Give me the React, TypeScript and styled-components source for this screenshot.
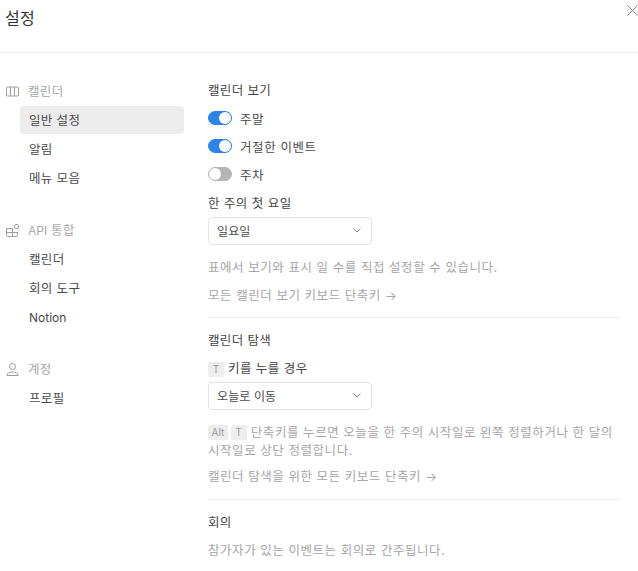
import React from "react";
import styled, { createGlobalStyle } from "styled-components";

const Global = createGlobalStyle`
  html, body { margin: 0; padding: 0; background: #fff; }
  body { font-family: Inter, "Noto Sans CJK KR", sans-serif; font-size: 12.5px; letter-spacing: 0.35px; color: #37352f; }
`;

const Page = styled.div`
  width: 638px;
  height: 571px;
  overflow: hidden;
  display: flex;
  flex-direction: column;
  position: relative;
`;
const Header = styled.header`
  height: 53px;
  flex: none;
  box-sizing: border-box;
  border-bottom: 1px solid #ededed;
  padding: 7px 0 0 5px;
`;
const Title = styled.h1`
  margin: 0;
  font-size: 16px;
  line-height: 22px;
  font-weight: 400;
  color: #333;
`;
const Close = styled.button`
  position: absolute;
  top: 5px;
  right: 0;
  width: 11px;
  height: 11px;
  padding: 0;
  border: 0;
  background: none;
  color: #8a8a8a;
  display: flex;
`;
const Body = styled.div`
  display: flex;
  flex: 1;
  min-height: 0;
`;
const Sidebar = styled.nav`
  width: 184px;
  flex: none;
  box-sizing: border-box;
  padding: 24px 0 0 5px;
  display: flex;
  flex-direction: column;
`;
const Group = styled.div`
  display: flex;
  flex-direction: column;
  margin-bottom: 23px;
`;
const GroupHead = styled.div`
  height: 29px;
  display: flex;
  align-items: center;
  gap: 8px;
  color: #a8a8a8;
  line-height: 16px;
`;
const GroupIcon = styled.svg`
  width: 15px;
  height: 15px;
  flex: none;
  color: #9c9c9c;
`;
const Item = styled.div<{ $active?: boolean; $latin?: boolean }>`
  height: 28px;
  box-sizing: border-box;
  margin: 0 0 1px 15px;
  padding: 0 0 ${(p) => (p.$latin ? "0" : "2px")} 9px;
  display: flex;
  align-items: center;
  border-radius: 4px;
  color: #4a4a4a;
  background: ${(p) => (p.$active ? "#ececec" : "transparent")};
`;
const Latin = styled.span`
  font-size: 12px;
  letter-spacing: 0;
`;
const Main = styled.main`
  width: 412px;
  margin-left: 24px;
  flex: none;
  padding-top: 29px;
  box-sizing: border-box;
`;
const Heading = styled.div<{ $mt?: number }>`
  margin-top: ${(p) => p.$mt ?? 0}px;
  line-height: 18px;
  color: #444;
`;
const ToggleRow = styled.div<{ $mt: number }>`
  height: 18px;
  margin-top: ${(p) => p.$mt}px;
  display: flex;
  align-items: center;
  gap: 8px;
  color: #4a4a4a;
  letter-spacing: 0.6px;
`;
const Track = styled.span<{ $on: boolean }>`
  width: 24px;
  height: 14px;
  border-radius: 7px;
  box-sizing: border-box;
  display: flex;
  align-items: center;
  justify-content: ${(p) => (p.$on ? "flex-end" : "flex-start")};
  background: ${(p) => (p.$on ? "#2b84e8" : "#b5b5b5")};
  border: 1px solid ${(p) => (p.$on ? "#2b84e8" : "#b5b5b5")};
`;
const Knob = styled.span`
  width: 12px;
  height: 12px;
  border-radius: 50%;
  background: #fff;
`;
const FieldLabel = styled(Heading)`
  display: flex;
  align-items: center;
  gap: 4px;
  letter-spacing: 0.45px;
`;
const Select = styled.div`
  width: 164px;
  height: 28px;
  margin-top: 4px;
  box-sizing: border-box;
  border: 1px solid #e3e3e3;
  border-radius: 4px;
  padding: 0 9px 2px 8px;
  display: flex;
  align-items: center;
  justify-content: space-between;
  color: #4a4a4a;
  font-size: 12px;
  letter-spacing: 0.1px;
`;
const Hint = styled.p<{ $mt: number }>`
  margin: ${(p) => p.$mt}px 0 0;
  line-height: 18px;
  color: #a6a6a6;
  letter-spacing: 0.55px;
`;
const Divider = styled.hr<{ $mt: number }>`
  border: 0;
  border-top: 1px solid #ededed;
  margin: ${(p) => p.$mt}px 0 0;
`;
const Key = styled.kbd`
  display: inline-flex;
  align-items: center;
  justify-content: center;
  min-width: 16px;
  height: 15px;
  padding: 0 3.500px;
  box-sizing: border-box;
  border-radius: 2px;
  background: #ededed;
  color: #9a9a9a;
  font: inherit;
  font-size: 10px;
  letter-spacing: 0;
  vertical-align: 1px;
`;
const KeyGap = styled.span`
  display: inline-block;
  width: 3px;
`;

const Chevron = () => (
  <svg width="10" height="10" viewBox="0 0 10 10" fill="none" stroke="#8c8c8c" strokeWidth="1">
    <path d="M1.500 3.500 5 7l3.500-3.500" />
  </svg>
);

const Toggle = ({ on, label, mt }: { on: boolean; label: string; mt: number }) => (
  <ToggleRow $mt={mt}>
    <Track $on={on}>
      <Knob />
    </Track>
    {label}
  </ToggleRow>
);

export default function App() {
  return (
    <Page>
      <Global />
      <Header>
        <Title>설정</Title>
      </Header>
      <Close aria-label="닫기">
        <svg width="11" height="11" viewBox="0 0 11 11" fill="none" stroke="currentColor" strokeWidth="1">
          <path d="M.5.5l10 10M10.500.5l-10 10" />
        </svg>
      </Close>
      <Body>
        <Sidebar>
          <Group>
            <GroupHead>
              <GroupIcon viewBox="0 0 15 15" fill="none" stroke="currentColor" strokeWidth="1">
                <rect x="1.500" y="3" width="12" height="9" rx="1" />
                <path d="M5.500 3v9M9.500 3v9" />
              </GroupIcon>
              캘린더
            </GroupHead>
            <Item $active>일반 설정</Item>
            <Item>알림</Item>
            <Item>메뉴 모음</Item>
          </Group>
          <Group>
            <GroupHead>
              <GroupIcon viewBox="0 0 15 15" fill="none" stroke="currentColor" strokeWidth="1">
                <path d="M1.500 5.500h6v8h-5a1 1 0 0 1-1-1zM7.500 9.500h5v3a1 1 0 0 1-1 1h-4zM1.500 9.500h6" />
                <rect x="9.500" y="1.500" width="4" height="4" rx="1.500" />
              </GroupIcon>
              <span><Latin>API</Latin> 통합</span>
            </GroupHead>
            <Item>캘린더</Item>
            <Item>회의 도구</Item>
            <Item $latin><Latin>Notion</Latin></Item>
          </Group>
          <Group>
            <GroupHead>
              <GroupIcon viewBox="0 0 15 15" fill="none" stroke="currentColor" strokeWidth="1">
                <circle cx="7.500" cy="4.500" r="3" />
                <path d="M2 13.500c0-2.200 1.800-3.500 5.500-3.500s5.500 1.300 5.500 3.500z" />
              </GroupIcon>
              계정
            </GroupHead>
            <Item>프로필</Item>
          </Group>
        </Sidebar>
        <Main>
          <Heading>캘린더 보기</Heading>
          <Toggle mt={9} on label="주말" />
          <Toggle mt={10} on label="거절한 이벤트" />
          <Toggle mt={10} on={false} label="주차" />
          <FieldLabel $mt={12}>한 주의 첫 요일</FieldLabel>
          <Select>
            일요일
            <Chevron />
          </Select>
          <Hint $mt={14}>표에서 보기와 표시 일 수를 직접 설정할 수 있습니다.</Hint>
          <Hint $mt={10}>모든 캘린더 보기 키보드 단축키 →</Hint>
          <Divider $mt={12} />
          <Heading $mt={14}>캘린더 탐색</Heading>
          <FieldLabel $mt={10}>
            <Key>T</Key>키를 누를 경우
          </FieldLabel>
          <Select>
            오늘로 이동
            <Chevron />
          </Select>
          <Hint $mt={14}>
            <Key>Alt</Key><KeyGap /><Key>T</Key> 단축키를 누르면 오늘을 한 주의 시작일로 왼쪽 정렬하거나 한 달의 시작일로 상단 정렬합니다.
          </Hint>
          <Hint $mt={8}>캘린더 탐색을 위한 모든 키보드 단축키 →</Hint>
          <Divider $mt={13} />
          <Heading $mt={14}>회의</Heading>
          <Hint $mt={10}>참가자가 있는 이벤트는 회의로 간주됩니다.</Hint>
        </Main>
      </Body>
    </Page>
  );
}
